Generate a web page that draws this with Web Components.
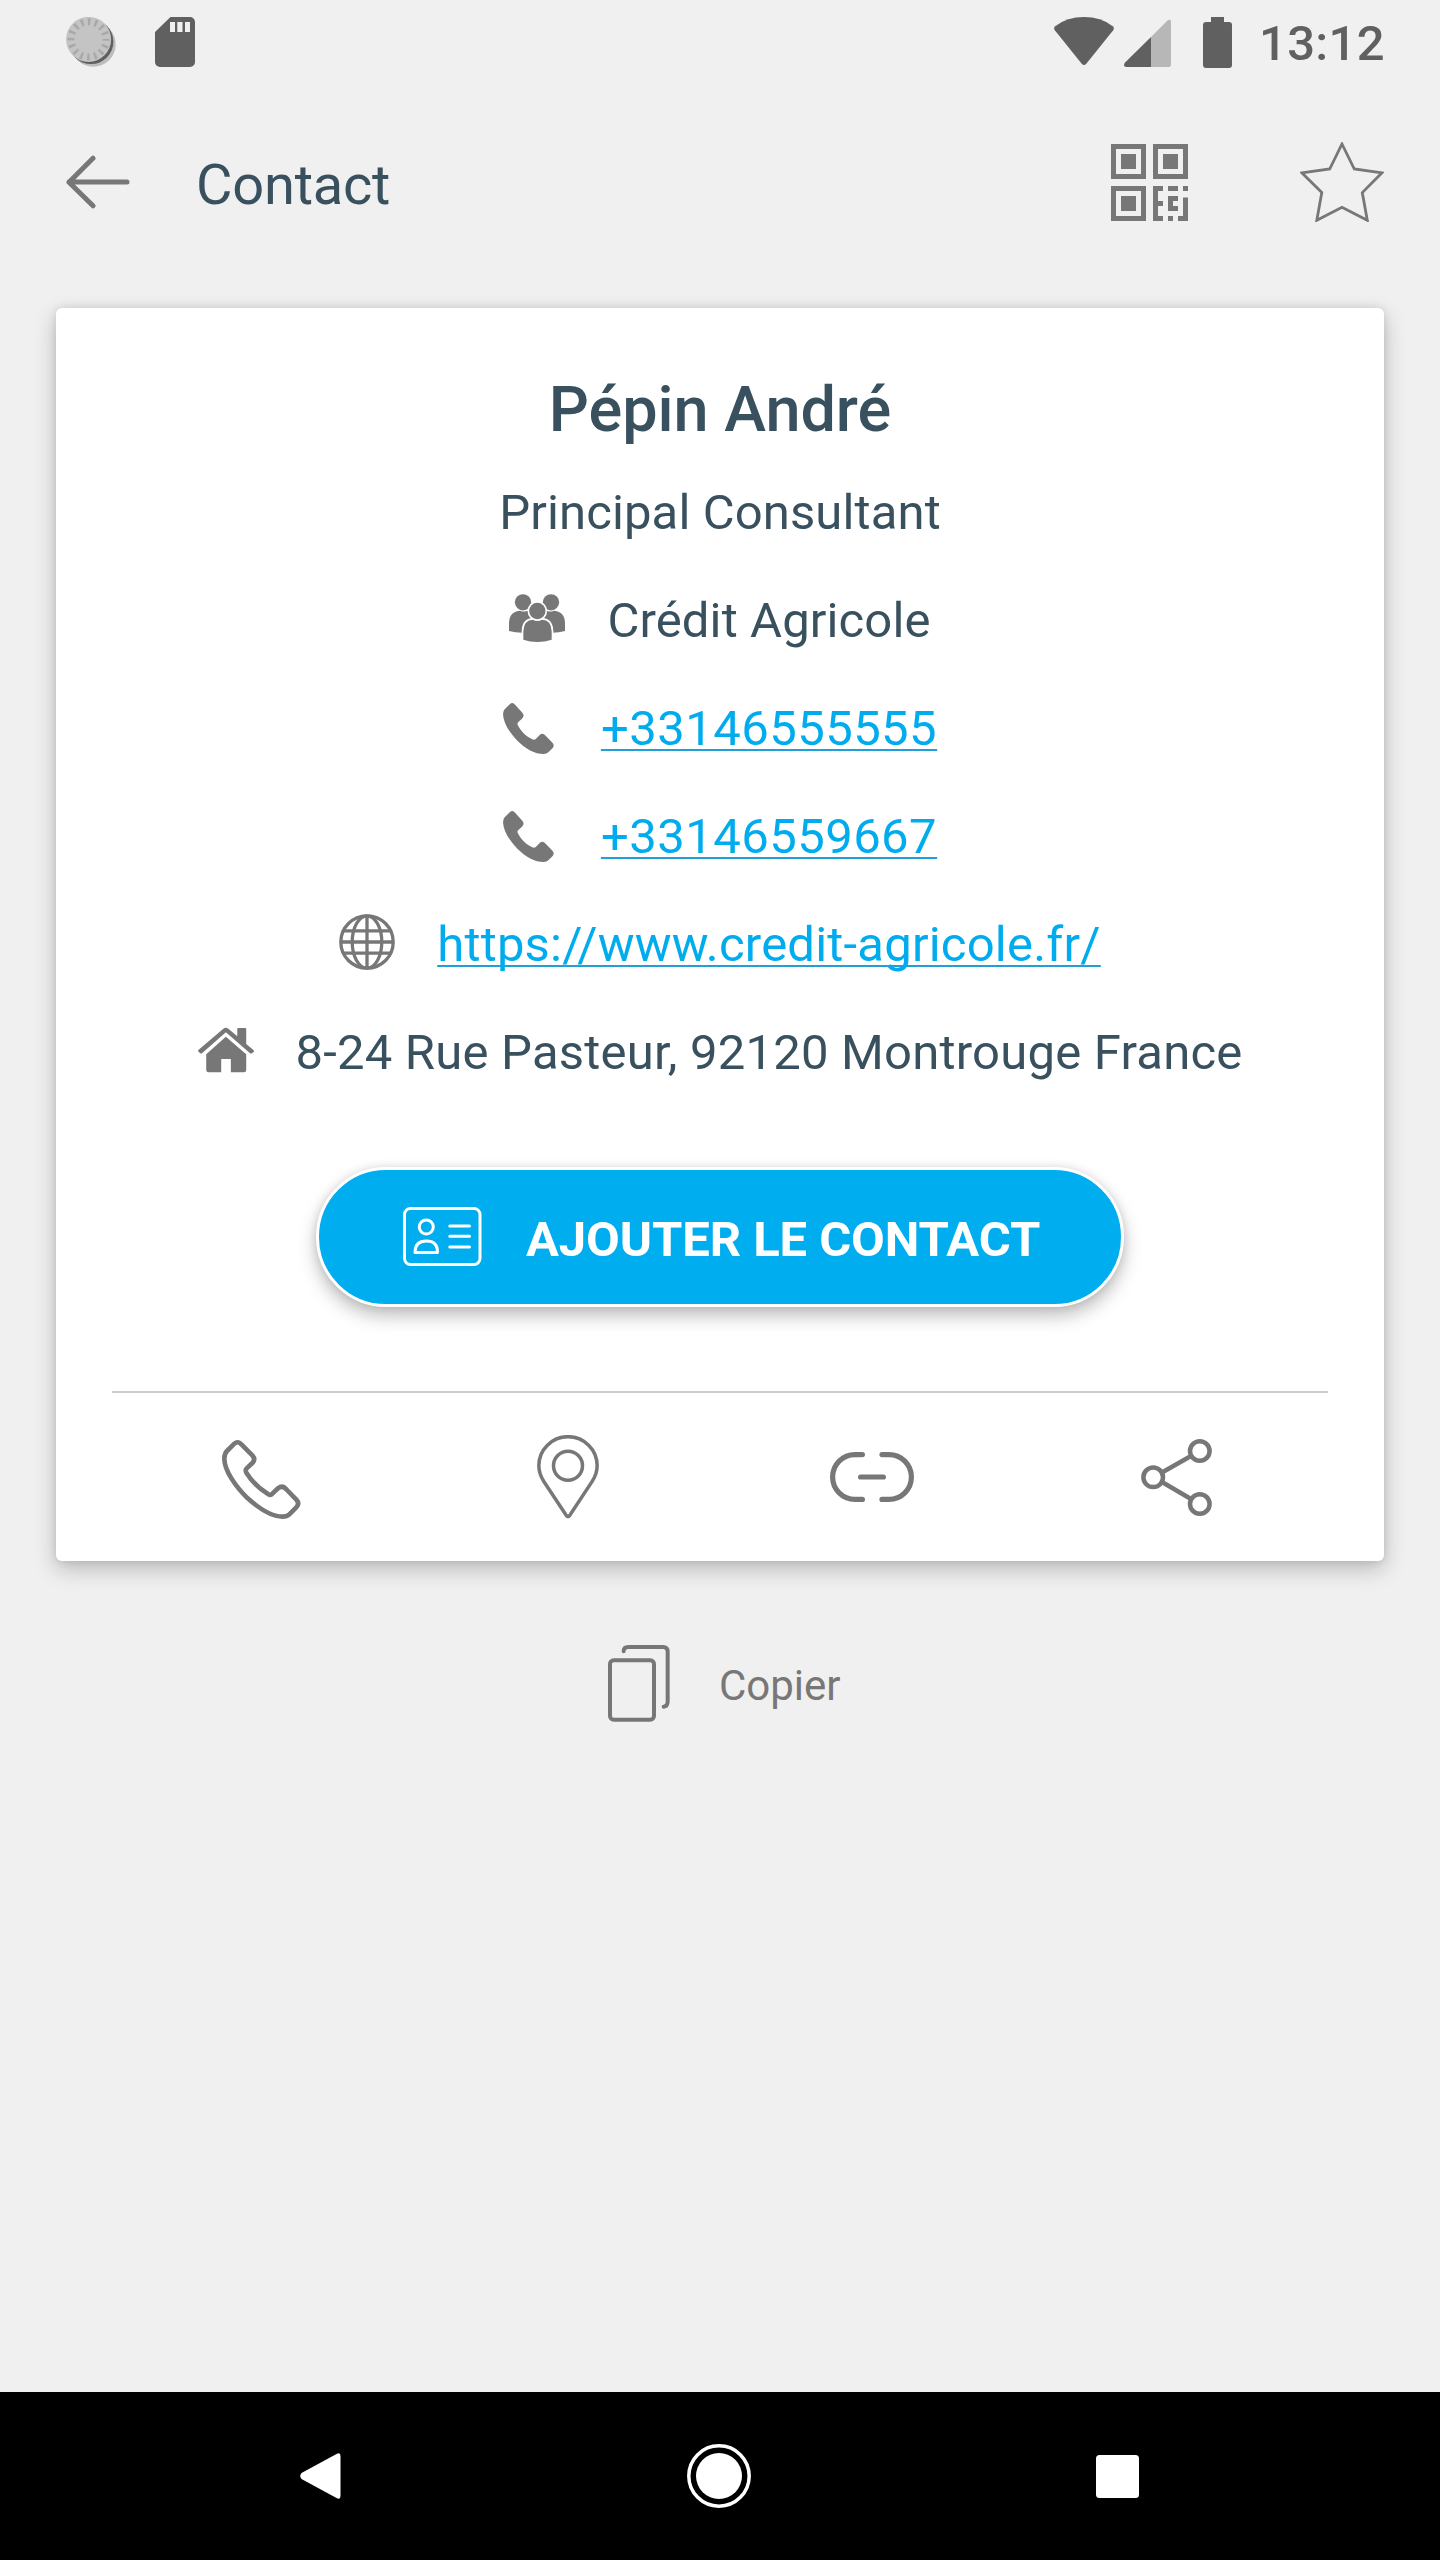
<!DOCTYPE html>
<html lang="fr">
<head>
<meta charset="utf-8">
<title>Contact</title>
<style>
html,body{margin:0;padding:0;background:#f0f0f0}
body{font-family:Roboto,"Liberation Sans",sans-serif;color:#39505e}
</style>
</head>
<body>
<contact-screen></contact-screen>
<script>
// name: [width, height, viewBox, markup]
const ICONS = {
  sync:[50,50,'66 17 50 50',`<circle cx="93.3" cy="44.4" r="22.4" fill="#bdbdbd"/><circle cx="91" cy="41.7" r="22.4" fill="#5f5f5f"/><circle cx="88.6" cy="39.4" r="22.5" fill="#c4c4c4"/><circle cx="88.6" cy="39.4" r="17.6" fill="none" stroke="#a9a9a9" stroke-width="7" stroke-dasharray="2.6 4.31" stroke-dashoffset="1.3"/>`],
  sd:[40,50,'155 17 40 50',`<path fill="#606060" fill-rule="evenodd" d="M170.500 17H190a5 5 0 0 1 5 5V62a5 5 0 0 1-5 5H160a5 5 0 0 1-5-5V32ZM170 22V32h5V22ZM177.300 22V32h5.200V22ZM185 22V32h5V22Z"/>`],
  wifi:[60,50,'1054 17 60 50',`<path fill="#606060" d="M1055.200 26.200Q1067 17 1084 17T1112.800 26.200Q1114.600 28 1113.200 30.300L1086.300 63.800Q1084 66.300 1081.700 63.800L1054.800 30.300Q1053.400 28 1055.200 26.200Z"/>`],
  signal:[47,50,'1124 17 47 50',`<path fill="#b7b7b7" d="M1151 67V37L1167.500 20.600Q1171 18.600 1171 22V65Q1171 67 1169 67Z"/><path fill="#606060" d="M1151 67V37L1124.800 62.800Q1122.600 67 1126.500 67Z"/>`],
  battery:[29,51,'1203 16 29 51',`<path fill="#606060" d="M1211 16h13v5h5a3 3 0 0 1 3 3v40a3 3 0 0 1-3 3h-23a3 3 0 0 1-3-3v-40a3 3 0 0 1 3-3h5z"/>`],
  back:[64,54,'66 155 64 54',`<path fill="none" stroke="currentColor" stroke-width="5" stroke-linecap="round" stroke-linejoin="round" d="M93 158.200L69 182.200 93 205.800M69 182H127"/>`],
  qr:[77,77,'1111 144 77 77',`<g fill="none" stroke="currentColor" stroke-width="5"><path d="M1113.500 146.500h30v30h-30zM1155.500 146.500h30v30h-30zM1113.500 188.500h30v30h-30z"/></g><path fill="currentColor" d="M1121 154h15v15h-15zM1163 154h15v15h-15zM1121 196h15v15h-15zM1153 186h10v5h-5v10h5v5h-5v10h5v5h-10zM1168 186h10v5h-10zM1183 186h5v5h-5zM1168 196h10v5h-5v5h5v5h-10zM1183 197.500h5v23.500h-10v-5h5zM1168 216h5v5h-5z"/>`],
  star:[84,80,'1300 142 84 80',`<path fill="none" stroke="currentColor" stroke-width="2.800" d="M1342 144L1354.300 169 1382 172.800 1362.300 192.600 1367.300 220.300 1342 207.300 1316.800 220.300 1321.800 192.600 1301.800 172.800 1329.700 169Z"/>`],
  group:[56,56,'87 690 168 168',`<g fill="currentColor"><circle cx="129" cy="727" r="24.500"/><circle cx="213" cy="727" r="24.500"/><path d="M87 813V789Q88 753 122 752Q128 757 142 752H200Q214 757 220 752Q254 753 255 789V813Q235 819 210 818H135Q108 819 87 813Z"/></g><g fill="currentColor" stroke="#fff" stroke-width="10" paint-order="stroke"><path d="M130 839V814Q131 780 159 779Q172 786 186 779Q214 780 215 814V839Q195 846 172 846T130 839Z"/><circle cx="172" cy="753" r="24.500"/></g>`],
  phone:[56,56,'68 54 168 168',`<path fill="currentColor" d="M89 72L73 88Q68 93 68 103C69 128 87 158 111 182C135 206 164 222 190 222Q199 222 204 217L217 204Q223 197 217 189L196 167Q187 157 178 165L167 176Q162 181 156 178C137 168 122 155 112 134Q110 130 114 126L125 116Q134 107 126 98L105 75Q97 65 89 72Z"/>`],
  globe:[56,56,'340 914 56 56',`<g fill="none" stroke="currentColor" stroke-width="3.300"><circle cx="368" cy="942" r="26.200"/><ellipse cx="368" cy="942" rx="14.800" ry="26.200"/><path d="M368 915V969M342 942H394M344.500 930.800H391.500M344.500 953.200H391.500"/></g>`],
  home:[56,56,'50 396 156.800 168',`<g fill="currentColor"><path d="M51 480L121 416Q128 410 135 416L160 439V417Q160 414 163 414H182Q185 414 185 417V462L206 481Q208 484 205 487L201 490Q198 492 195 489L128 427 62 489Q59 492 56 489L52 486Q49 483 51 480Z"/><path d="M128 440L185 493V540Q185 547 179 547H142V507H115V547H80Q73 547 73 540V493Z"/></g>`],
  card:[79,59,'403 1207 79 59',`<g fill="none" stroke="#fff" stroke-width="3" stroke-linecap="round" stroke-linejoin="round"><rect x="404.500" y="1208.500" width="75.500" height="56" rx="6"/><circle cx="426.300" cy="1227" r="7"/><path d="M415 1252.500Q415 1241 426.300 1241T437.500 1252.500ZM449.800 1226H469.500M449.800 1236.300H469.500M449.800 1247H469.500"/></g>`],
  call:[84,84,'126 165 252 252',`<path fill="none" stroke="currentColor" stroke-width="14" stroke-linejoin="round" d="M163 191L141 213Q133 221 133 236C133 270 165 318 203 355C240 388 280 410 307 410Q321 410 328 403L349 382Q360 371 349 359L321 330Q308 314 295 324L277 341Q272 347 265 343Q224 318 199 278Q195 270 200 265L217 249Q228 238 217 226L185 194Q174 181 163 191Z"/>`],
  pin:[84,84,'1038 165 252 252',`<g fill="none" stroke="currentColor" stroke-width="10.500"><path d="M1168 408Q1164 413 1160 408L1092 305Q1076.500 281 1076.500 257A87.500 87 0 0 1 1251.500 257Q1251.500 281 1236 305Z"/><circle cx="1164" cy="257.500" r="43.500"/></g>`],
  link:[84,84,'830 1435 84 84',`<g fill="none" stroke="currentColor" stroke-width="5.200" stroke-linecap="round"><path d="M862.400 1454.600H855A22.400 22.400 0 0 0 855 1499.400H862.400M882 1454.600H889A22.400 22.400 0 0 1 889 1499.400H882M860.600 1477H883.400"/></g>`],
  share:[84,84,'1134 1435 84 84',`<g fill="none" stroke="currentColor" stroke-width="4.500"><circle cx="1199.800" cy="1451" r="9.800"/><circle cx="1153.200" cy="1477.300" r="9.800"/><circle cx="1199.800" cy="1504" r="9.800"/><path d="M1162 1472.500L1191 1456M1162 1482L1191 1499"/></g>`],
  copy:[62,77,'83 75 186 231',`<g fill="none" stroke="currentColor" stroke-width="12" stroke-linecap="round"><rect x="89" y="121" width="132" height="178" rx="11"/><path d="M130 94Q130 81 144 81H248Q262 81 262 95V244Q262 259 250 260"/></g>`],
  navback:[41,46,'300.500 2453 41 46',`<path fill="#fff" d="M302 2473L337 2454Q341 2452 341 2456V2496Q341 2500 337 2498L302 2479Q299.500 2476 302 2473Z"/>`],
  navhome:[64,64,'0 0 64 64',`<circle cx="32" cy="32" r="30.200" fill="none" stroke="#fff" stroke-width="3.500"/><circle cx="32" cy="32" r="23" fill="#fff"/>`],
  navrecent:[43,43,'0 0 43 43',`<rect width="43" height="43" rx="3.500" fill="#fff"/>`]
};
const define = (name, html) => customElements.define(name, class extends HTMLElement {
  constructor(){ super(); this.attachShadow({mode:'open'}).innerHTML = html; }
});

customElements.define('ui-icon', class extends HTMLElement {
  connectedCallback(){
    const [w,h,box,body] = ICONS[this.getAttribute('name')];
    const root = this.shadowRoot || this.attachShadow({mode:'open'});
    root.innerHTML = `<style>:host{display:block;flex:none;color:#777}svg{display:block}</style><svg width="${w}" height="${h}" viewBox="${box}" preserveAspectRatio="none" aria-hidden="true">${body}</svg>`;
  }
});

define('status-bar', `<style>
:host{display:flex;justify-content:space-between;height:84px}
div{display:flex;align-items:center;height:84px}
.l{gap:39px;padding-left:66px}
.r{width:386px}
.sig{margin-left:10px}.bat{margin:0 27px 0 32px}
span{font-size:49px;font-weight:500;line-height:84px;color:#606060;padding-top:4px;letter-spacing:.3px}
</style><div class="l"><ui-icon name="sync"></ui-icon><ui-icon name="sd"></ui-icon></div>
<div class="r"><ui-icon name="wifi"></ui-icon><ui-icon class="sig" name="signal"></ui-icon><ui-icon class="bat" name="battery"></ui-icon><span><slot></slot></span></div>`);

define('app-bar', `<style>
:host{display:flex;align-items:center;height:196px;padding:0 56px 0 66px}
h1{margin:0 auto 0 66px;padding-top:6px;font-size:56px;font-weight:400;line-height:70px;letter-spacing:-.22px}
.star{margin-left:112px}
</style><ui-icon name="back"></ui-icon><h1><slot></slot></h1><ui-icon name="qr"></ui-icon><ui-icon class="star" name="star"></ui-icon>`);

customElements.define('info-row', class extends HTMLElement {
  connectedCallback(){
    const icon = this.getAttribute('icon');
    const root = this.shadowRoot || this.attachShadow({mode:'open'});
    root.innerHTML = `<style>
:host{display:flex;justify-content:center;align-items:center;gap:42px;height:108px;font-size:49px;line-height:108px;white-space:nowrap;letter-spacing:.12px}
:host([icon=phone]){letter-spacing:.46px}
:host([icon=globe]),:host([icon=home]){letter-spacing:.21px}
ui-icon{margin-bottom:4px}
span{margin-top:2px}
:host([link]) span{color:#00acee;text-decoration:underline 2px #229fd6;text-underline-offset:4px;text-decoration-skip-ink:none}
</style>${icon ? `<ui-icon name="${icon}"></ui-icon>` : ''}<span><slot></slot></span>`;
  }
});

define('add-button', `<style>
:host{display:block;width:808px;margin:61px auto 84px}
button{box-sizing:border-box;display:flex;align-items:center;width:808px;height:140px;padding:0 0 0 84px;border:3px solid #fff;border-radius:70px;background:#00aeef;color:#fff;font:700 49px/134px Roboto,sans-serif;letter-spacing:-.09px;box-shadow:0 9px 18px rgba(0,0,0,.25),0 0 8px rgba(0,0,0,.1);white-space:nowrap}
ui-icon{margin-bottom:2px}
span{margin-left:44px;padding-top:5px}
</style><button><ui-icon name="card"></ui-icon><span><slot></slot></span></button>`);

define('action-bar', `<style>
:host{display:flex;justify-content:space-between;align-items:center;height:168px;margin:0 56px;padding:0 110px;border-top:2px solid #ccc}
</style><ui-icon name="call"></ui-icon><ui-icon name="pin"></ui-icon><ui-icon name="link"></ui-icon><ui-icon name="share"></ui-icon>`);

define('contact-card', `<style>
:host{display:block;margin:28px 56px 0;padding-top:51px;background:#fff;border-radius:6px;box-shadow:0 8px 22px rgba(0,0,0,.23),0 0 8px rgba(0,0,0,.1)}
h2{margin:0;height:99px;text-align:center;font-size:63px;font-weight:500;line-height:101px;letter-spacing:-.05px}
</style><h2><slot name="name"></slot></h2><slot></slot><add-button>AJOUTER LE CONTACT</add-button><action-bar></action-bar>`);

define('copy-action', `<style>
:host{display:flex;align-items:center;height:78px;margin-top:83px;padding-left:608px;gap:49px;font-size:42px;color:#777}
span{line-height:78px;padding-top:5px}
</style><ui-icon name="copy"></ui-icon><span><slot></slot></span>`);

define('nav-bar', `<style>
:host{display:flex;align-items:center;justify-content:space-between;height:168px;margin-top:auto;background:#000;padding:0 301px 0 300px}
.h{margin-left:1.500px}
</style><ui-icon name="navback"></ui-icon><ui-icon class="h" name="navhome"></ui-icon><ui-icon name="navrecent"></ui-icon>`);

define('contact-screen', `<style>
:host{display:flex;flex-direction:column;width:1440px;height:2560px;background:#f0f0f0;overflow:hidden}
</style>
<status-bar>13:12</status-bar>
<app-bar>Contact</app-bar>
<contact-card>
<span slot="name">Pépin André</span>
<info-row>Principal Consultant</info-row>
<info-row icon="group">Crédit Agricole</info-row>
<info-row icon="phone" link>+33146555555</info-row>
<info-row icon="phone" link>+33146559667</info-row>
<info-row icon="globe" link>https://www.credit-agricole.fr/</info-row>
<info-row icon="home">8-24 Rue Pasteur, 92120 Montrouge France</info-row>
</contact-card>
<copy-action>Copier</copy-action>
<nav-bar></nav-bar>`);
</script>
</body>
</html>
